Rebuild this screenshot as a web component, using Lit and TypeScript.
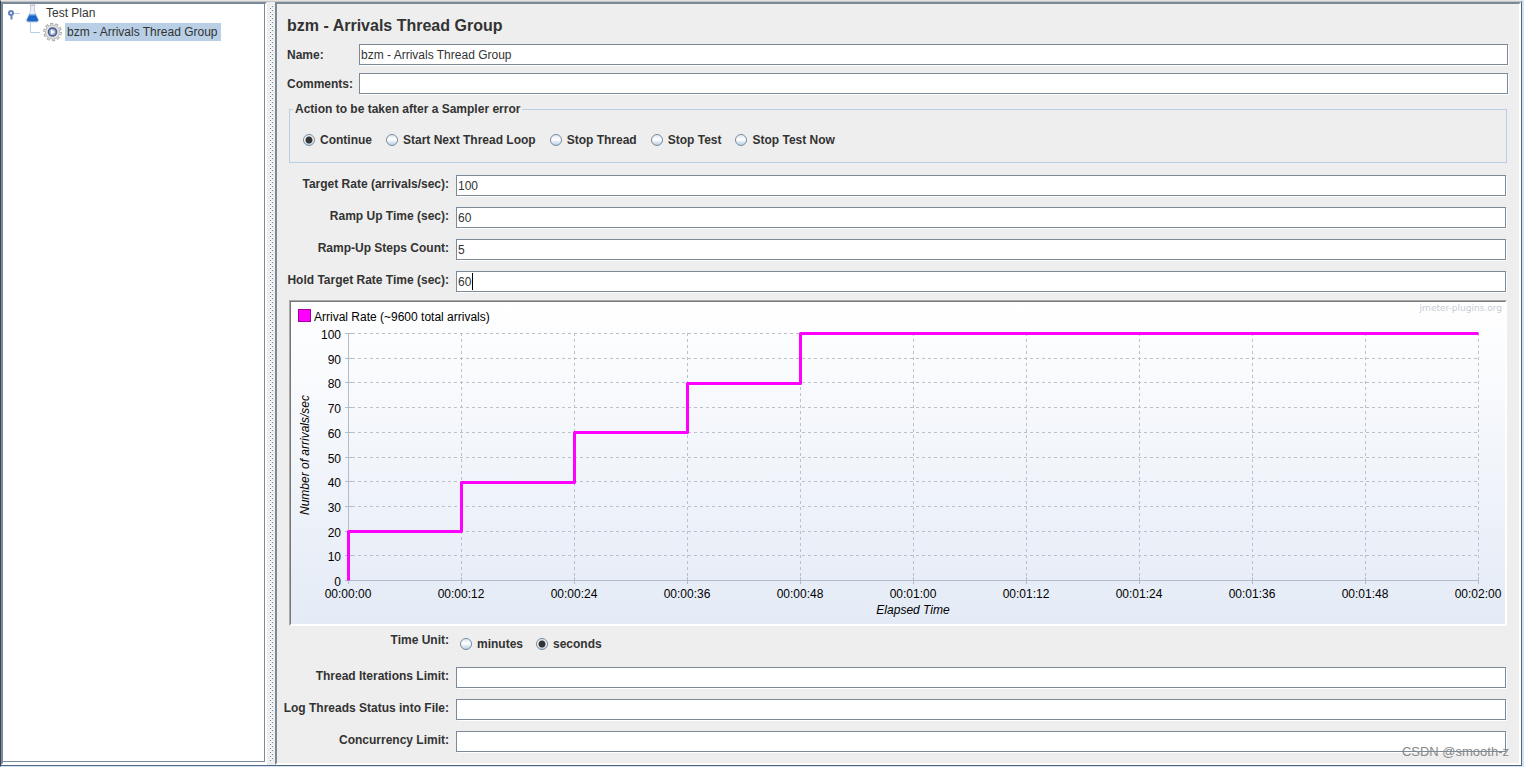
import { LitElement, html, svg, css } from "lit";
import { customElement, property, state } from "lit/decorators.js";

interface RatePoint {
  time: number;
  rate: number;
}

const clock = (seconds: number): string =>
  [Math.floor(seconds / 3600), Math.floor(seconds / 60) % 60, seconds % 60]
    .map((part) => String(part).padStart(2, "0"))
    .join(":");

/** Schedule preview: arrival rate over elapsed time, redrawn at the width available. */
@customElement("rate-chart")
export class RateChart extends LitElement {
  @property({ type: Number }) target = 100;
  @property({ type: Number }) ramp = 60;
  @property({ type: Number }) steps = 5;
  @property({ type: Number }) hold = 60;
  @state() private width = 1214;

  private observer = new ResizeObserver((entries) => {
    this.width = Math.max(300, Math.round(entries[0].contentRect.width) - 2);
  });

  static styles = css`
    :host {
      display: block;
      border: 1px solid;
      border-color: #a8a8a8 #fff #fff #a8a8a8;
      background: linear-gradient(#fff, #e4ebf6);
      min-width: 0;
      overflow: hidden;
    }
    svg {
      display: block;
      box-sizing: border-box;
      width: 100%;
      height: 324px;
      border: 1px solid;
      border-color: #777 #fff #fff #777;
      font: 12px "Liberation Sans", Arial, sans-serif;
      fill: #000;
    }
    .grid {
      stroke: #bac0cc;
      stroke-dasharray: 3 3;
    }
    .axis {
      stroke: #b4bcc9;
    }
    .end {
      text-anchor: end;
    }
    .mid {
      text-anchor: middle;
    }
    .title {
      font-style: italic;
      text-anchor: middle;
    }
    .series {
      fill: none;
      stroke: #f0f;
      stroke-width: 3;
      stroke-linejoin: round;
    }
    .swatch {
      fill: #f0f;
      stroke: #a000a0;
    }
    .credit {
      font: 9px "DejaVu Sans", Verdana, sans-serif;
      fill: #c8ccd6;
      text-anchor: end;
    }
  `;

  connectedCallback() {
    super.connectedCallback();
    this.observer.observe(this);
  }

  disconnectedCallback() {
    this.observer.disconnect();
    super.disconnectedCallback();
  }

  private schedule(): RatePoint[] {
    const points: RatePoint[] = [{ time: 0, rate: 0 }];
    const stepTime = this.ramp / this.steps;
    for (let i = 1; i <= this.steps; i++) {
      const rate = (this.target * i) / this.steps;
      const start = (i - 1) * stepTime;
      points.push({ time: start, rate });
      points.push({ time: i === this.steps ? this.ramp + this.hold : i * stepTime, rate });
    }
    return points;
  }

  render() {
    const left = 57;
    const right = this.width - 27;
    const top = 31;
    const bottom = 278;
    const total = this.ramp + this.hold;
    const x = (t: number) => Math.round(left + ((right - left) * t) / total) + 0.5;
    const level = (r: number) => bottom - ((bottom - top) * r) / this.target;
    const y = (r: number) => Math.round(level(r)) + 0.5;
    const times = Array.from({ length: 11 }, (_, i) => (total * i) / 10);
    const rates = Array.from({ length: 11 }, (_, i) => (this.target * i) / 10);
    const line = this.schedule()
      .map((p) => `${x(p.time)},${Math.ceil(level(p.rate)) + 0.5}`)
      .join(" ");

    return html`<svg role="img" aria-label="Arrival Rate">
      ${times.slice(1).map(
        (t) => svg`<line class="grid" x1=${x(t)} x2=${x(t)} y1=${bottom - 4} y2=${top}></line>
          <line class="axis" x1=${x(t)} x2=${x(t)} y1=${bottom - 3} y2=${bottom + 4}></line>`
      )}
      ${rates.slice(1).map(
        (r) => svg`<line class="grid" x1=${left + 4} x2=${right} y1=${y(r)} y2=${y(r)}></line>
          <line class="axis" x1=${left - 3} x2=${left + 4} y1=${y(r)} y2=${y(r)}></line>`
      )}
      <line class="axis" x1=${left - 3} x2=${right + 1} y1=${y(0)} y2=${y(0)}></line>
      <line class="axis" x1=${x(0)} x2=${x(0)} y1=${top} y2=${bottom + 4}></line>
      ${rates.map((r) => svg`<text class="end" x="50" y=${y(r) + 5.5}>${r}</text>`)}
      ${times.map((t) => svg`<text class="mid" x=${x(t) - 0.5} y="296">${clock(t)}</text>`)}
      <polyline class="series" points=${line}></polyline>
      <rect class="swatch" x="7.5" y="7.5" width="12" height="12"></rect>
      <text x="23" y="19">Arrival Rate (~9600 total arrivals)</text>
      <text class="title" x=${(left + right) / 2} y="312">Elapsed Time</text>
      <text class="title" transform="translate(18 153) rotate(-90)">Number of arrivals/sec</text>
      <text class="credit" x=${this.width - 3} y="9">jmeter-plugins.org</text>
    </svg>`;
  }
}

@customElement("app-root")
export class AppRoot extends LitElement {
  static styles = css`
    * {
      box-sizing: border-box;
    }
    :host {
      --slate: #7a8a99;
      --ink: #333;
      --sky: #b8cfe5;
      display: flex;
      box-sizing: border-box;
      min-height: 100vh;
      border: 1px solid;
      border-color: #e4e4e4 #cfe3f7 #cfe3f7 #3c4656;
      border-right-width: 2px;
      background: #eee;
      color: var(--ink);
      font: 12px/18px "Liberation Sans", Arial, sans-serif;
    }
    .window {
      flex: 1;
      display: flex;
      min-width: 0;
      border-top: 1px solid #c4c4c4;
      border-bottom: 1px solid #56657a;
      border-right: 1px solid #56657a;
    }
    .tree {
      flex: none;
      width: 266px;
      border: 2px solid;
      border-color: var(--slate) #fff #fff var(--slate);
      background: #fff;
    }
    .tree-body {
      height: 100%;
      border-right: 1px solid var(--slate);
      border-bottom: 1px solid var(--slate);
      padding-left: 4px;
    }
    .tree ul {
      list-style: none;
      margin: 0;
      padding: 0;
    }
    .tree .root {
      margin-top: -1px;
    }
    .node {
      display: flex;
      align-items: center;
      height: 19px;
    }
    .node svg {
      flex: none;
      overflow: visible;
    }
    .node span {
      padding: 0 3px 0 2px;
    }
    .child {
      padding-left: 22px;
    }
    .selected {
      background: var(--sky);
    }
    .divider {
      flex: none;
      width: 8px;
      padding: 3px 0 4px 3px;
    }
    .dots {
      display: block;
      width: 4px;
      height: 100%;
    }
    .editor {
      flex: 1;
      min-width: 0;
      border: 2px solid;
      border-color: var(--slate) #fff #fff var(--slate);
      padding: 12px 11px 10px 10px;
      font-weight: bold;
    }
    h1 {
      margin: 0 0 8px;
      font-size: 16px;
      line-height: 20px;
    }
    .head {
      display: grid;
      grid-template-columns: 65px minmax(0, 1fr);
      gap: 8px 7px;
      align-items: center;
    }
    input[type="text"] {
      display: block;
      width: 100%;
      height: 21px;
      border: 1px solid var(--slate);
      border-radius: 0;
      padding: 0 2px 0 1px;
      background: #fff;
      box-shadow: 1px 1px 0 #fff;
      color: var(--ink);
      font: 12px "Liberation Sans", Arial, sans-serif;
      outline: none;
    }
    .body {
      margin: 6px 1px 0 2px;
    }
    fieldset {
      margin: 0;
      padding: 13px 13px 13px;
      border: 1px solid var(--sky);
      min-width: 0;
    }
    legend {
      margin-left: -10px;
      padding: 0 2px;
      line-height: 18px;
    }
    .choices {
      display: flex;
      flex-wrap: wrap;
      gap: 0 14px;
    }
    .choices label {
      display: flex;
      align-items: center;
      gap: 5px;
    }
    input[type="radio"] {
      appearance: none;
      width: 12px;
      height: 12px;
      margin: 0;
      border: 1px solid var(--slate);
      border-radius: 50%;
      background: linear-gradient(#dde8f3, #fff 45%, #b8cfe5);
    }
    input[type="radio"]:checked {
      background: radial-gradient(circle, #333 3px, transparent 4px),
        linear-gradient(#dde8f3, #fff 45%, #b8cfe5);
    }
    .rows {
      display: grid;
      grid-template-columns: 160px minmax(0, 1fr);
      gap: 11px 7px;
      margin-right: 1px;
    }
    .rows > label,
    .caption {
      justify-self: end;
      white-space: nowrap;
    }
    .rates {
      margin-top: 12px;
    }
    rate-chart {
      margin: 8px 0 5px;
    }
    .unit {
      display: grid;
      grid-template-columns: 160px minmax(0, 1fr);
      gap: 11px;
      margin-bottom: 10px;
    }
    .unit .choices {
      height: 26px;
      gap: 13px;
    }
    .field {
      position: relative;
    }
    .caret {
      position: absolute;
      left: 16px;
      top: 2px;
      width: 1px;
      height: 17px;
      background: #000;
    }
    .mark {
      position: absolute;
      right: 15px;
      bottom: 6px;
      color: #888;
      font-size: 13px;
    }
  `;

  private radio(group: string, label: string, checked = false) {
    return html`<label><input type="radio" name=${group} .checked=${checked} />${label}</label>`;
  }

  private row(id: string, label: string, value = "", caret = false) {
    return html`<label for=${id}>${label}</label>
      <div class="field">
        <input type="text" id=${id} .value=${value} />
        ${caret ? html`<span class="caret"></span>` : ""}
      </div>`;
  }

  render() {
    return html`
      <div class="window">
        <nav class="tree">
          <div class="tree-body">
            <ul class="root">
              <li>
                <div class="node">
                  <svg width="37" height="19" viewBox="0 0 37 19">
                    <path d="M7 10.500H13" stroke="#b8cfe5" />
                    <circle cx="4" cy="10" r="2" fill="#fff" stroke="#6382bf" stroke-width="2" />
                    <path d="M4.500 12.500v4" stroke="#6382bf" stroke-width="2" />
                    <path d="M23.500 2.500h4v6l4 8.500q.5 2-1.500 2h-9q-2 0-1.500-2l4-8.500z" fill="#e8eff6" stroke="#c3ccd8" />
                    <path d="M22.500 11.500h6l2.500 5q.5 2-1.500 2h-8q-2 0-1.500-2z" fill="#1b66c9" />
                    <path d="M22.500 12h6" stroke="#6db1f2" />
                    <path d="M22.500 2h6" stroke="#b0bdca" />
                  </svg>
                  <span>Test Plan</span>
                </div>
                <ul>
                  <li class="node child">
                    <svg width="36" height="19" viewBox="0 0 36 19">
                      <path d="M1.500 0V10.500H11" fill="none" stroke="#b8cfe5" />
                      <circle cx="23.500" cy="10" r="8" fill="none" stroke="#a6a6a6" stroke-width="2.600" stroke-dasharray="3 2.027" />
                      <circle cx="23.500" cy="10" r="7" fill="#e4e4e4" stroke="#b4b4b4" />
                      <circle cx="23.500" cy="10" r="7.600" fill="none" stroke="#dedede" stroke-width="1.800" stroke-dasharray="1.600 3.175" stroke-dashoffset="-.6" />
                      <circle cx="23.500" cy="10" r="4" fill="#9db4d6" stroke="#465c88" stroke-width="1.600" />
                      <path d="M22 7.500l4 2.500-4 2.500z" fill="#fff" />
                    </svg>
                    <span class="selected">bzm - Arrivals Thread Group</span>
                  </li>
                </ul>
              </li>
            </ul>
          </div>
        </nav>
        <div class="divider">
          <svg class="dots" aria-hidden="true">
            <defs>
              <pattern id="bumps" width="4" height="4" patternUnits="userSpaceOnUse">
                <path d="M0 2h1v1H0zM2 0h1v1H2z" fill="#fff" />
                <path d="M0 3h1v1H0zM2 1h1v1H2z" fill="#7a8a99" />
              </pattern>
            </defs>
            <rect width="4" height="100%" fill="url(#bumps)" />
          </svg>
        </div>
        <main class="editor">
          <h1>bzm - Arrivals Thread Group</h1>
          <div class="head">
            ${this.row("name", "Name:", "bzm - Arrivals Thread Group")}
            ${this.row("comments", "Comments:")}
          </div>
          <div class="body">
            <fieldset>
              <legend>Action to be taken after a Sampler error</legend>
              <div class="choices">
                ${this.radio("action", "Continue", true)}
                ${this.radio("action", "Start Next Thread Loop")}
                ${this.radio("action", "Stop Thread")}
                ${this.radio("action", "Stop Test")}
                ${this.radio("action", "Stop Test Now")}
              </div>
            </fieldset>
            <div class="rows rates">
              ${this.row("target", "Target Rate (arrivals/sec):", "100")}
              ${this.row("ramp", "Ramp Up Time (sec):", "60")}
              ${this.row("steps", "Ramp-Up Steps Count:", "5")}
              ${this.row("hold", "Hold Target Rate Time (sec):", "60", true)}
            </div>
            <rate-chart></rate-chart>
            <div class="unit" role="radiogroup" aria-labelledby="unit">
              <span class="caption" id="unit">Time Unit:</span>
              <div class="choices">
                ${this.radio("unit", "minutes")} ${this.radio("unit", "seconds", true)}
              </div>
            </div>
            <div class="rows">
              ${this.row("iterations", "Thread Iterations Limit:")}
              ${this.row("log", "Log Threads Status into File:")}
              ${this.row("limit", "Concurrency Limit:")}
            </div>
          </div>
        </main>
      </div>
      <div class="mark">CSDN @smooth-z</div>
    `;
  }
}
